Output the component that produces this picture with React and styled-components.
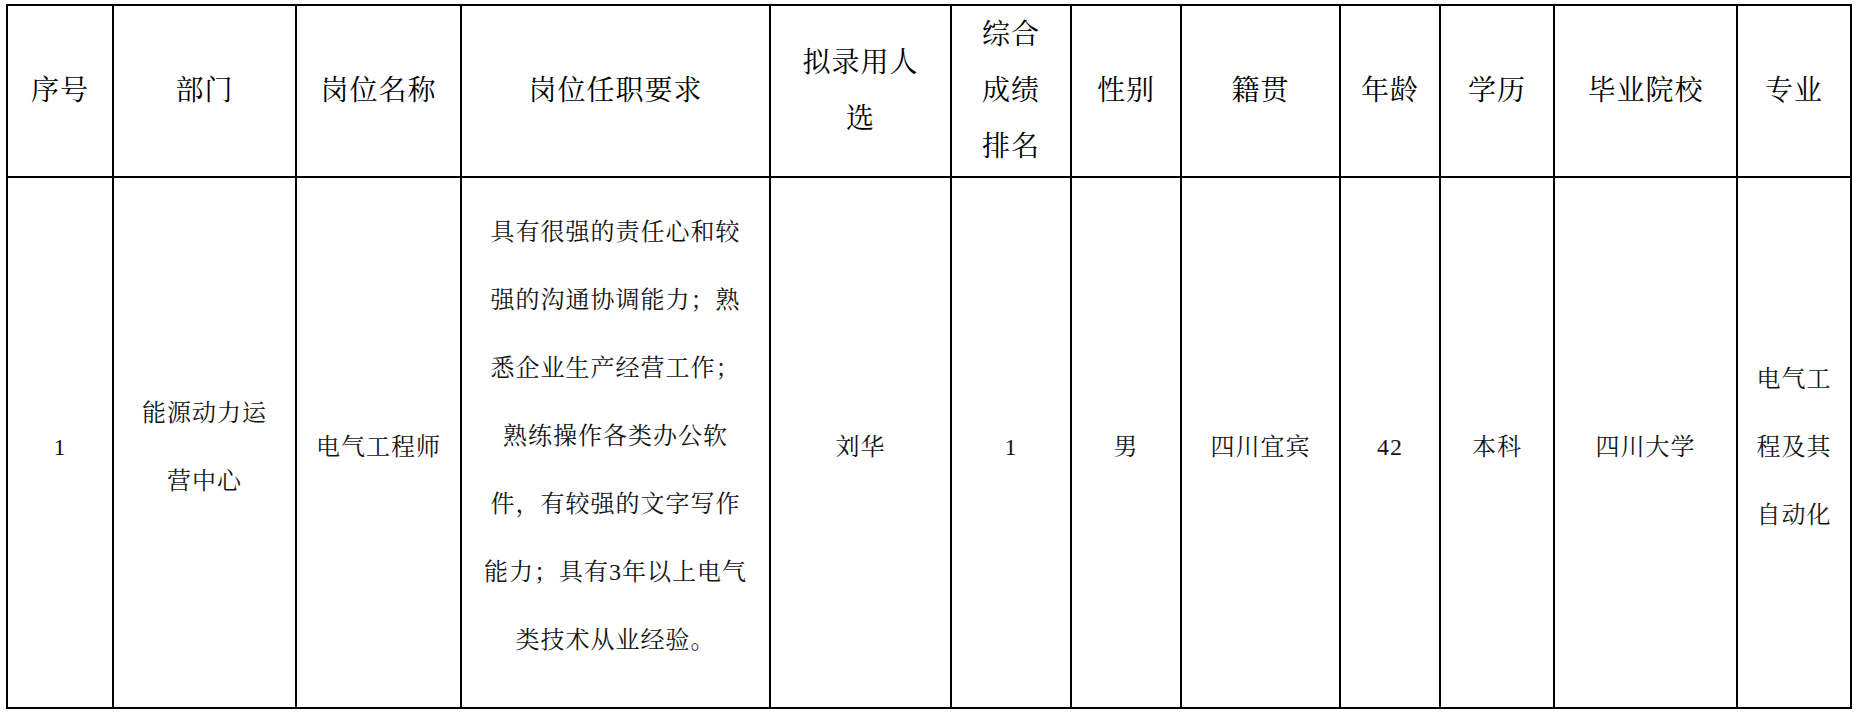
import React from 'react';
import styled, { createGlobalStyle } from 'styled-components';

const GlobalStyle = createGlobalStyle`
  html, body {
    margin: 0;
    background: #fff;
  }
  body {
    padding: 4px 0 0 6px;
    font-family: "Liberation Serif", "Noto Serif CJK SC", "Noto Sans CJK SC", serif;
    color: #000;
  }
`;

const Sheet = styled.div`
  display: grid;
  grid-template-columns: 104px 181px 163px 307px 179px 118px 108px 157px 98px 112px 181px 112px;
  grid-template-rows: 170px 529px;
  gap: 2px;
  padding: 2px;
  width: max-content;
  background: #000;
`;

const HeadCell = styled.div`
  display: flex;
  align-items: center;
  justify-content: center;
  background: #fff;
  text-align: center;
  font-size: 28px;
  line-height: 56px;
  letter-spacing: 1px;
  color: #000;
`;

const BodyCell = styled.div`
  display: flex;
  align-items: center;
  justify-content: center;
  background: #fff;
  text-align: center;
  font-size: 24px;
  line-height: 68px;
  letter-spacing: 1px;
  color: #141414;
  padding: ${(p) => (p.$long ? '0 0 13px' : '8px 0 0')};
`;

const Lines = styled.div`
  display: flex;
  flex-direction: column;
  align-items: center;
  white-space: nowrap;
`;

const columns = [
  { head: ['序号'], body: ['1'] },
  { head: ['部门'], body: ['能源动力运', '营中心'] },
  { head: ['岗位名称'], body: ['电气工程师'] },
  {
    head: ['岗位任职要求'],
    long: true,
    body: [
      '具有很强的责任心和较',
      '强的沟通协调能力；熟',
      '悉企业生产经营工作；',
      '熟练操作各类办公软',
      '件，有较强的文字写作',
      '能力；具有3年以上电气',
      '类技术从业经验。',
    ],
  },
  { head: ['拟录用人', '选'], body: ['刘华'] },
  { head: ['综合', '成绩', '排名'], body: ['1'] },
  { head: ['性别'], body: ['男'] },
  { head: ['籍贯'], body: ['四川宜宾'] },
  { head: ['年龄'], body: ['42'] },
  { head: ['学历'], body: ['本科'] },
  { head: ['毕业院校'], body: ['四川大学'] },
  { head: ['专业'], body: ['电气工', '程及其', '自动化'] },
];

const App = () => {
  return (
    <>
      <GlobalStyle />
      <Sheet>
        {columns.map((c, i) => (
          <HeadCell key={'h' + i}>
            <Lines>
              {c.head.map((t) => (
                <span key={t}>{t}</span>
              ))}
            </Lines>
          </HeadCell>
        ))}
        {columns.map((c, i) => (
          <BodyCell key={'b' + i} $long={c.long}>
            <Lines>
              {c.body.map((t) => (
                <span key={t}>{t}</span>
              ))}
            </Lines>
          </BodyCell>
        ))}
      </Sheet>
    </>
  );
};

export default App;
